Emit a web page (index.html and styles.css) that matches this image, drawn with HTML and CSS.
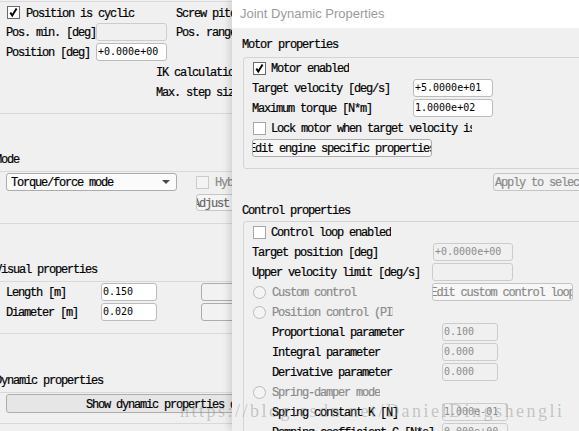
FILE: index.html
```html
<!DOCTYPE html>
<html lang="en">
<head>
<meta charset="utf-8">
<title>Joint Dynamic Properties</title>
<link rel="stylesheet" href="styles.css">
</head>
<body>
<div class="screen">
  <section class="lp">
    <div class="topline"></div>
    <div class="row r1">
      <div class="c1"><span class="cb on"><svg width="11" height="11" viewBox="0 0 11 11"><path d="M2.3 5.6 L4.3 8.6 L8.6 1.6" fill="none" stroke="#000" stroke-width="1.9"/></svg></span><span class="tx">Position is cyclic</span></div>
      <span class="c2 tx">Screw pitch [m/deg]</span>
    </div>
    <div class="row">
      <div class="c1"><span class="lab90 tx">Pos. min. [deg]</span><span class="inp dis w71"></span></div>
      <span class="c2 tx">Pos. range [deg]</span>
    </div>
    <div class="row">
      <div class="c1"><span class="lab90 tx">Position [deg]</span><span class="inp w71">+0.000e+00</span></div>
    </div>
    <div class="row ind"><span class="tx">IK calculation weight</span></div>
    <div class="row ind"><span class="tx">Max. step size</span></div>

    <div class="sep sa"></div>
    <div class="stitle">Mode</div>
    <div class="sep"></div>
    <div class="mode">
      <div class="combo"><span class="tx">Torque/force mode</span><span class="arrow"></span></div>
      <div class="mode-r">
        <div class="line18"><span class="cb dis"></span><span class="grey tx">Hybrid operation</span></div>
        <div class="btn adj"><span class="tx">Adjust dependency</span></div>
      </div>
    </div>

    <div class="sep"></div>
    <div class="stitle">Visual properties</div>
    <div class="sep"></div>
    <div class="visual">
      <div class="row"><span class="lab95 tx">Length [m]</span><span class="inp w56">0.150</span><span class="btn vbtn"></span></div>
      <div class="row"><span class="lab95 tx">Diameter [m]</span><span class="inp w56">0.020</span><span class="btn vbtn"></span></div>
    </div>

    <div class="sep"></div>
    <div class="stitle st3">Dynamic properties</div>
    <div class="sep"></div>
    <div class="dyn">
      <div class="btn dynbtn"><span class="tx">Show dynamic properties dialog</span></div>
    </div>
    <div class="sep"></div>
  </section>

  <section class="dlg">
    <header class="dtitle">Joint Dynamic Properties</header>
    <div class="dbody">
      <div class="gtitle">Motor properties</div>
      <div class="group g1">
        <div class="row"><span class="cb on"><svg width="11" height="11" viewBox="0 0 11 11"><path d="M2.3 5.6 L4.3 8.6 L8.6 1.6" fill="none" stroke="#000" stroke-width="1.9"/></svg></span><span class="t tx">Motor enabled</span></div>
        <div class="row"><span class="lab161 tx">Target velocity [deg/s]</span><span class="inp w80">+5.0000e+01</span></div>
        <div class="row"><span class="lab161 tx">Maximum torque [N*m]</span><span class="inp w80">1.0000e+02</span></div>
        <div class="row"><span class="cb off"></span><span class="t tx clip201">Lock motor when target velocity is zero</span></div>
        <div class="row"><span class="btn ebtn"><span class="tx">Edit engine specific properties</span></span></div>
      </div>
      <div class="apply"><span class="btn abtn"><span class="tx">Apply to selected joints</span></span></div>

      <div class="gtitle g2t">Control properties</div>
      <div class="group g2">
        <div class="row"><span class="cb off"></span><span class="t tx">Control loop enabled</span></div>
        <div class="row"><span class="lab181 tx">Target position [deg]</span><span class="inp dis w80">+0.0000e+00</span></div>
        <div class="row"><span class="lab180 tx">Upper velocity limit [deg/s]</span><span class="inp dis w81"></span></div>
        <div class="row"><span class="rd"></span><span class="t tx grey clip160">Custom control</span><span class="btn cbtn"><span class="tx">Edit custom control loop</span></span></div>
        <div class="row"><span class="rd"></span><span class="t tx grey clip121">Position control (PID)</span></div>
        <div class="row"><span class="plab tx">Proportional parameter</span><span class="inp dis w56">0.100</span></div>
        <div class="row"><span class="plab tx">Integral parameter</span><span class="inp dis w56">0.000</span></div>
        <div class="row"><span class="plab tx">Derivative parameter</span><span class="inp dis w56">0.000</span></div>
        <div class="row"><span class="rd"></span><span class="t tx grey">Spring-damper mode</span></div>
        <div class="row"><span class="plab tx">Spring constant K [N]</span><span class="inp dis w66">1.000e-01</span></div>
        <div class="row"><span class="plab tx">Damping coefficient C [N*s]</span><span class="inp dis w66">0.000e+00</span></div>
      </div>
    </div>
  </section>

  <div class="watermark">https://blog.csdn.net/DanielDingshengli</div>
</div>
</body>
</html>
```

FILE: styles.css
```css
* { box-sizing: border-box; }
html, body { margin: 0; padding: 0; }
body {
  background: #f0f0f0;
  font-family: "Liberation Mono", "Courier New", monospace;
  font-size: 12px;
  letter-spacing: -1.2px;
  color: #000;
  -webkit-text-stroke: 0.2px currentColor;
}
.screen {
  position: relative;
  display: flex;
  width: 579px;
  height: 431px;
  overflow: hidden;
}
.tx { padding-top: 2px; }

/* ---------- left panel ---------- */
.lp {
  flex: none;
  width: 232px;
  height: 431px;
  overflow: hidden;
  display: flex;
  flex-direction: column;
}
.topline { flex: none; height: 1px; margin-top: 1px; background: #dadada; }
.row {
  flex: none;
  display: flex;
  align-items: center;
  height: 20px;
  white-space: nowrap;
}
.lp .row { padding-left: 6px; }
.lp .r1 { height: 19px; margin-top: 1px; }
.lp .row.ind { padding-left: 156px; }
.c1 { flex: none; display: flex; align-items: center; width: 170px; }
.c2 { flex: none; }
.r1 .cb { margin-left: 1px; margin-right: 6px; }
.lab90 { flex: none; width: 90px; }
.lab95 { flex: none; width: 95px; }

.cb {
  flex: none;
  width: 13px;
  height: 13px;
  border: 1px solid #6a6a6a;
  background: #fff;
  display: flex;
  align-items: center;
  justify-content: center;
}
.cb svg { display: block; }
.cb.off { border-color: #a6a6a6; }
.cb.dis { border-color: #cbcbcb; background: #f3f3f3; }

.inp {
  flex: none;
  height: 18px;
  border: 1px solid #bcbcbc;
  border-radius: 3px;
  background: #fff;
  font-family: "DejaVu Sans Mono", monospace;
  font-size: 10px;
  letter-spacing: 0;
  -webkit-text-stroke: 0;
  line-height: 16px;
  padding: 0 1px;
  overflow: hidden;
  white-space: nowrap;
  color: #000;
}
.inp.dis { background: #f0f0f0; border-color: #cccccc; color: #8c8c8c; }
.w56 { width: 56px; }
.w66 { width: 66px; }
.w71 { width: 71px; }
.w80 { width: 80px; }
.w81 { width: 81px; }

.sep { flex: none; height: 1px; background: #d9d9d9; }
.sep.sa { margin-top: 11px; }
.stitle {
  flex: none;
  height: 20px;
  margin-top: 35px;
  margin-bottom: 2px;
  padding-top: 2px;
  display: flex;
  align-items: center;
  white-space: nowrap;
  text-indent: -5px;
}
.stitle.st3 { margin-top: 36px; }

.mode {
  flex: none;
  height: 51px;
  padding-top: 1px;
  display: flex;
  align-items: flex-start;
}
.combo {
  flex: none;
  margin-left: 6px;
  width: 171px;
  height: 18px;
  border: 1px solid #acacac;
  border-radius: 3px;
  background: #fbfbfb;
  display: flex;
  align-items: center;
  justify-content: space-between;
  padding: 0 6px 0 4px;
  white-space: nowrap;
}
.arrow {
  width: 0;
  height: 0;
  border-left: 4px solid transparent;
  border-right: 4px solid transparent;
  border-top: 4px solid #4a4a4a;
}
.mode-r { flex: none; margin-left: 19px; width: 120px; }
.line18 { height: 18px; display: flex; align-items: center; white-space: nowrap; }
.line18 .cb { margin-right: 6px; }
.grey { color: #8a8a8a; }

.btn {
  flex: none;
  height: 18px;
  border: 1px solid #adadad;
  border-radius: 3px;
  background: #f5f5f5;
  display: flex;
  align-items: center;
  justify-content: center;
  overflow: hidden;
  white-space: nowrap;
}
.btn > span { flex: none; }
.adj {
  margin-top: 3px;
  height: 17px;
  width: 110px;
  justify-content: flex-start;
  border-color: #c6c6c6;
  color: #666;
}
.adj > span { margin-left: -4px; }

.visual { flex: none; height: 51px; }
.vbtn { margin-left: 44px; width: 80px; background: #f2f2f2; }

.dyn { flex: none; height: 30px; padding-top: 1px; }
.dynbtn { margin-left: 6px; width: 340px; height: 19px; background: #e6e6e6; }

/* ---------- dialog ---------- */
.dlg {
  flex: none;
  position: relative;
  z-index: 1;
  width: 347px;
  height: 431px;
  overflow: hidden;
  background: #f0f0f0;
  box-shadow: -3px 0 7px rgba(0, 0, 0, 0.13);
}
.dtitle {
  height: 28px;
  background: #fff;
  font-family: "Liberation Sans", Arial, sans-serif;
  font-size: 13px;
  letter-spacing: 0;
  -webkit-text-stroke: 0;
  color: #9b9b9b;
  padding: 0 0 2px 8px;
  display: flex;
  align-items: center;
}
.dbody { padding-top: 6px; }
.gtitle {
  height: 20px;
  padding-left: 10px;
  padding-top: 2px;
  margin-bottom: 3px;
  display: flex;
  align-items: center;
  white-space: nowrap;
}
.gtitle.g2t { margin-top: 9px; margin-bottom: 1px; }
.group {
  margin-left: 11px;
  margin-right: -12px;
  border: 1px solid #d4d4d4;
  border-radius: 3px;
  padding: 0 0 10px 8px;
}
.group .cb, .group .rd { margin-left: 1px; margin-right: 5px; }
.group .rd { margin-right: 6px; }
.t { flex: none; overflow: hidden; }
.clip201 { width: 201px; }
.clip160 { width: 160px; }
.clip121 { width: 121px; }
.lab161 { flex: none; width: 161px; }
.lab181 { flex: none; width: 181px; }
.lab180 { flex: none; width: 180px; }
.plab { flex: none; width: 190px; padding-left: 20px; }

.rd {
  flex: none;
  width: 13px;
  height: 13px;
  border-radius: 50%;
  border: 1px solid #bababa;
  background: #f4f4f4;
}
.ebtn { width: 180px; background: #f7f7f7; }
.cbtn { width: 141px; background: #f7f7f7; border-color: #c4c4c4; color: #8a8a8a; }
.apply { margin-top: 4px; padding-left: 261px; display: flex; }
.abtn {
  width: 110px;
  justify-content: flex-start;
  padding-left: 1px;
  border-color: #c4c4c4;
  background: #f2f2f2;
  color: #8a8a8a;
}

.watermark {
  position: absolute;
  left: 180px;
  top: 402px;
  z-index: 5;
  font-family: "Liberation Serif", "Times New Roman", serif;
  font-size: 18px;
  line-height: 18px;
  letter-spacing: 2.5px;
  -webkit-text-stroke: 0;
  color: rgba(140, 140, 140, 0.45);
  white-space: nowrap;
  pointer-events: none;
}
```
